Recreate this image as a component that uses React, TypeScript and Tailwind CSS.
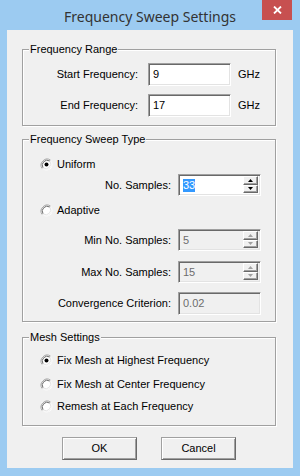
import type { ReactNode } from 'react'

const ui = "font-['Liberation_Sans',Arial,sans-serif] text-[11px] leading-[13px] text-black"

export default function App() {
  return (
    <div className="flex h-[476px] w-[300px] flex-col bg-[#9ccbf1]">
      <div className="relative flex h-[30px] items-center justify-center">
        <div className="pt-[2px] font-['Noto_Sans','Open_Sans',sans-serif] text-[14px] text-[#333]">Frequency Sweep Settings</div>
        <div className="absolute right-[8px] top-0 flex h-[20px] w-[30px] items-center justify-center bg-[#c75050]">
          <svg width="9" height="8" viewBox="0 0 9 8">
            <path d="M1 0.5 L8 7.5 M8 0.5 L1 7.5" stroke="#fff" strokeWidth="1.8" />
          </svg>
        </div>
      </div>
      <div className="mx-[7px] mb-[8px] flex flex-1 flex-col bg-[#f0f0f0]">
        <div className={`${ui} flex flex-col`}>
          <Group title="Frequency Range" className="mt-[19px] pb-[8px]">
            <div className="mt-[7px] flex h-[23px] items-center">
              <div className="w-[115px] text-right">Start Frequency:</div>
              <TextBox value="9" className="ml-[10px]" />
              <div className="ml-[7px]">GHz</div>
            </div>
            <div className="mt-[8px] flex h-[23px] items-center">
              <div className="w-[115px] text-right">End Frequency:</div>
              <TextBox value="17" className="ml-[10px]" />
              <div className="ml-[7px]">GHz</div>
            </div>
          </Group>

          <Group title="Frequency Sweep Type" className="mt-[13px] pb-[7px]">
            <Radio label="Uniform" checked className="mt-[12px]" />
            <div className="mt-[3px] flex h-[22px] items-center">
              <div className="w-[148px] text-right">No. Samples:</div>
              <SpinBox value="33" selected className="ml-[7px]" />
            </div>
            <Radio label="Adaptive" className="mt-[8px]" />
            <div className="mt-[12px] flex h-[22px] items-center">
              <div className="w-[148px] text-right">Min No. Samples:</div>
              <SpinBox value="5" disabled className="ml-[7px]" />
            </div>
            <div className="mt-[10px] flex h-[22px] items-center">
              <div className="w-[148px] text-right">Max No. Samples:</div>
              <SpinBox value="15" disabled className="ml-[7px]" />
            </div>
            <div className="mt-[9px] flex h-[22px] items-center">
              <div className="w-[148px] text-right">Convergence Criterion:</div>
              <TextBox value="0.02" disabled className="ml-[7px]" />
            </div>
          </Group>

          <Group title="Mesh Settings" className="mt-[15px] pb-[12px]">
            <Radio label="Fix Mesh at Highest Frequency" checked className="mt-[10px]" />
            <Radio label="Fix Mesh at Center Frequency" className="mt-[11px]" />
            <Radio label="Remesh at Each Frequency" className="mt-[9px]" />
          </Group>

          <div className="ml-[55px] mt-[11px] flex gap-[24px]">
            <Button label="OK" />
            <Button label="Cancel" />
          </div>
        </div>
      </div>
    </div>
  )
}

function Group({ title, className, children }: { title: string; className?: string; children: ReactNode }) {
  return (
    <div className={`ml-[15px] flex w-[254px] flex-col border border-[#a0a0a0] shadow-[inset_1px_1px_0_#fff,1px_1px_0_#fff] ${className ?? ''}`}>
      <div className="-mt-[7px] ml-[6px] self-start bg-[#f0f0f0] px-[1px]">{title}</div>
      {children}
    </div>
  )
}

function TextBox({ value, disabled, className }: { value: string; disabled?: boolean; className?: string }) {
  return (
    <div
      className={`flex h-[23px] w-[83px] items-center border border-b-white border-l-[#a0a0a0] border-r-white border-t-[#a0a0a0] pl-[4px] shadow-[inset_1px_1px_0_#696969,inset_-1px_-1px_0_#e3e3e3] ${
        disabled ? 'bg-[#f0f0f0] text-[#6d6d6d]' : 'bg-white'
      } ${className ?? ''}`}
    >
      {value}
    </div>
  )
}

function SpinBox({ value, disabled, selected, className }: { value: string; disabled?: boolean; selected?: boolean; className?: string }) {
  return (
    <div
      className={`flex h-[22px] w-[83px] border border-b-white border-l-[#a0a0a0] border-r-white border-t-[#a0a0a0] p-[1px] shadow-[inset_1px_1px_0_#696969,inset_-1px_-1px_0_#e3e3e3] ${
        disabled ? 'bg-[#f0f0f0] text-[#6d6d6d]' : 'bg-white'
      } ${className ?? ''}`}
    >
      <div className="flex flex-1 items-center pl-[3px]">
        <span className={selected ? 'bg-[#3399ff] text-white' : ''}>{value}</span>
      </div>
      <div className="flex w-[16px] flex-col pr-[1px] pb-[1px]">
        <SpinButton up disabled={disabled} />
        <SpinButton disabled={disabled} />
      </div>
    </div>
  )
}

function SpinButton({ up, disabled }: { up?: boolean; disabled?: boolean }) {
  return (
    <div className="flex flex-1 items-center justify-center border border-b-[#696969] border-l-white border-r-[#696969] border-t-white bg-[#f0f0f0] shadow-[inset_-1px_-1px_0_#a0a0a0]">
      <svg width="5" height="3" viewBox="0 0 5 3">
        <path d={up ? 'M2.5 0 L5 3 L0 3 Z' : 'M0 0 L5 0 L2.5 3 Z'} fill={disabled ? '#a0a0a0' : '#000'} />
      </svg>
    </div>
  )
}

function Radio({ label, checked, className }: { label: string; checked?: boolean; className?: string }) {
  return (
    <div className={`ml-[17px] flex h-[13px] items-center gap-[4px] ${className ?? ''}`}>
      <svg width="13" height="13" viewBox="0 0 13 13">
        <circle cx="6.5" cy="6.5" r="6" fill="#fff" />
        <path d="M10.7 2.3 A6 6 0 0 0 2.3 10.7" fill="none" stroke="#a0a0a0" strokeWidth="1" />
        <path d="M9.9 3.1 A4.9 4.9 0 0 0 3.1 9.9" fill="none" stroke="#696969" strokeWidth="1" />
        <path d="M2.3 10.7 A6 6 0 0 0 10.7 2.3" fill="none" stroke="#f4f4f4" strokeWidth="1" />
        <path d="M3.1 9.9 A4.9 4.9 0 0 0 9.9 3.1" fill="none" stroke="#e3e3e3" strokeWidth="1" />
        {checked ? <circle cx="6.5" cy="6.5" r="2" fill="#000" /> : null}
      </svg>
      <span>{label}</span>
    </div>
  )
}

function Button({ label }: { label: string }) {
  return (
    <div className="flex h-[23px] w-[75px] items-center justify-center border border-b-[#696969] border-l-[#a0a0a0] border-r-[#696969] border-t-[#a0a0a0] bg-[#f0f0f0] shadow-[inset_1px_1px_0_#fff,inset_-1px_-1px_0_#a0a0a0]">
      {label}
    </div>
  )
}
